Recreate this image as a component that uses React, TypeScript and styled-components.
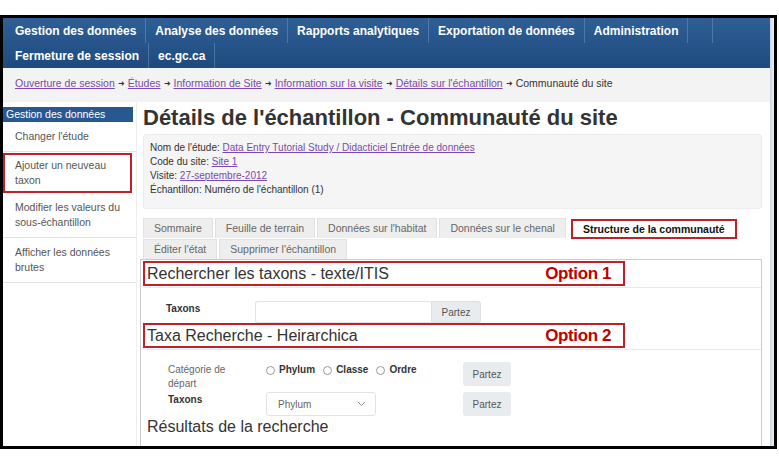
import React from "react";
import styled, { createGlobalStyle } from "styled-components";

const GlobalStyle = createGlobalStyle`
  body {
    margin: 0;
    background: #fff;
    font-family: "Liberation Sans", Arial, sans-serif;
  }
`;

const topMenu = [
  "Gestion des données",
  "Analyse des données",
  "Rapports analytiques",
  "Exportation de données",
  "Administration",
];

const crumbs = [
  "Ouverture de session",
  "Études",
  "Information de Site",
  "Information sur la visite",
  "Détails sur l'échantillon",
];

const sideItems = [
  { label: "Changer l'étude" },
  { label: "Ajouter un neuveau taxon", marked: true },
  { label: "Modifier les valeurs du sous-échantillon" },
  { label: "Afficher les données brutes" },
];

const tabsRow1 = [
  { label: "Sommaire" },
  { label: "Feuille de terrain" },
  { label: "Données sur l'habitat" },
  { label: "Données sur le chenal" },
  { label: "Structure de la communauté", active: true },
];

const tabsRow2 = [{ label: "Éditer l'état" }, { label: "Supprimer l'échantillon" }];

function App() {
  return (
    <>
      <GlobalStyle />
      <Frame>
        <Screen>
          <Content>
            <Nav>
              <NavRow>
                {topMenu.map((m, i) => (
                  <NavItem key={m} first={i === 0}>
                    {m}
                  </NavItem>
                ))}
                <NavItem />
              </NavRow>
              <NavRow>
                <NavItem first>Fermeture de session</NavItem>
                <NavItem>ec.gc.ca</NavItem>
              </NavRow>
            </Nav>
            <Breadcrumb>
              {crumbs.map((c) => (
                <React.Fragment key={c}>
                  <Crumb href="#">{c}</Crumb>
                  <Arrow>➜</Arrow>
                </React.Fragment>
              ))}
              <span>Communauté du site</span>
            </Breadcrumb>
            <Body>
              <Sidebar>
                <SideHeader>Gestion des données</SideHeader>
                {sideItems.map((s) => (
                  <SideItem key={s.label} marked={s.marked}>
                    {s.label}
                  </SideItem>
                ))}
              </Sidebar>
              <Main>
                <Title>Détails de l'échantillon - Communauté du site</Title>
                <InfoBox>
                  <div>
                    Nom de l'étude: <InfoLink href="#">Data Entry Tutorial Study / Didacticiel Entrée de données</InfoLink>
                  </div>
                  <div>
                    Code du site: <InfoLink href="#">Site 1</InfoLink>
                  </div>
                  <div>
                    Visite: <InfoLink href="#">27-septembre-2012</InfoLink>
                  </div>
                  <div>Échantillon: Numéro de l'échantillon (1)</div>
                </InfoBox>
                <Tabs>
                  <TabRow>
                    {tabsRow1.map((t) => (
                      <Tab key={t.label} active={t.active}>
                        {t.label}
                      </Tab>
                    ))}
                  </TabRow>
                  <TabRow>
                    {tabsRow2.map((t) => (
                      <Tab key={t.label}>{t.label}</Tab>
                    ))}
                  </TabRow>
                </Tabs>
                <Panel>
                  <SectionHead>
                    <Marked>
                      <span>Rechercher les taxons - texte/ITIS</span>
                      <OptionTag>Option 1</OptionTag>
                    </Marked>
                  </SectionHead>
                  <FormRow>
                    <FieldLabel bold>Taxons</FieldLabel>
                    <InputGroup>
                      <TextInput />
                      <AddonButton>Partez</AddonButton>
                    </InputGroup>
                  </FormRow>
                  <SectionHead>
                    <Marked>
                      <span>Taxa Recherche - Heirarchica</span>
                      <OptionTag>Option 2</OptionTag>
                    </Marked>
                  </SectionHead>
                  <HierForm>
                    <HierRow>
                      <FieldLabel>Catégorie de départ</FieldLabel>
                      <Radios>
                        {["Phylum", "Classe", "Ordre"].map((r) => (
                          <Radio key={r}>
                            <RadioDot />
                            {r}
                          </Radio>
                        ))}
                      </Radios>
                      <GrayButton>Partez</GrayButton>
                    </HierRow>
                    <HierRow>
                      <FieldLabel bold>Taxons</FieldLabel>
                      <Select>
                        <span>Phylum</span>
                        <svg width="9" height="6" viewBox="0 0 9 6">
                          <path d="M1 1l3.5 3.5L8 1" fill="none" stroke="#888" strokeWidth="1" />
                        </svg>
                      </Select>
                      <GrayButton>Partez</GrayButton>
                    </HierRow>
                  </HierForm>
                  <Results>Résultats de la recherche</Results>
                </Panel>
              </Main>
            </Body>
          </Content>
          <ScrollTrack />
        </Screen>
      </Frame>
    </>
  );
}

export default App;

const Frame = styled.div`
  margin-top: 15px;
  width: 777px;
  height: 434px;
  border: 3px solid #000;
  box-sizing: border-box;
  overflow: hidden;
  background: #fff;
`;

const Screen = styled.div`
  display: flex;
  height: 100%;
`;

const Content = styled.div`
  flex: 1;
  min-width: 0;
  display: flex;
  flex-direction: column;
`;

const ScrollTrack = styled.div`
  width: 4px;
  background: linear-gradient(90deg, #c9d4e0, #eef1f5);
`;

const Nav = styled.div`
  background: linear-gradient(#2f5f96, #1e4a7e);
  height: 50px;
`;

const NavRow = styled.div`
  display: flex;
  height: 25px;
`;

const NavItem = styled.div<{ first?: boolean }>`
  display: flex;
  align-items: center;
  padding: 0 9px 0 ${(p) => (p.first ? "12px" : "9px")};
  min-width: 6px;
  border-right: 1px solid rgba(150, 180, 215, 0.35);
  color: #fff;
  font-weight: bold;
  font-size: 12px;
  white-space: nowrap;
`;

const Breadcrumb = styled.div`
  display: flex;
  align-items: center;
  gap: 3px;
  height: 34px;
  padding: 0 0 4px 12px;
  box-sizing: border-box;
  background: #f3f3f3;
  font-size: 10.5px;
  color: #333;
  white-space: nowrap;
`;

const Crumb = styled.a`
  color: #7a48ae;
  text-decoration: underline;
`;

const Arrow = styled.span`
  font-size: 8px;
  color: #333;
`;

const Body = styled.div`
  flex: 1;
  display: flex;
  min-height: 0;
`;

const Sidebar = styled.div`
  width: 134px;
  padding-top: 5px;
  border-right: 1px solid #eee;
  box-sizing: border-box;
`;

const SideHeader = styled.div`
  height: 15px;
  line-height: 15px;
  padding-left: 3px;
  background: #285890;
  color: #fff;
  font-size: 10.5px;
  margin-right: 3px;
`;

const SideItem = styled.div<{ marked?: boolean }>`
  padding: ${(p) => (p.marked ? "3px 14px 3px 10px" : "7px 14px 7px 12px")};
  border: ${(p) => (p.marked ? "2px solid #c0202a" : "none")};
  border-bottom: ${(p) => (p.marked ? "2px solid #c0202a" : "1px solid #e3e3e3")};
  margin: ${(p) => (p.marked ? "1px 4px 0 0" : "0")};
  font-size: 10.5px;
  line-height: 15px;
  color: #555;
`;

const Main = styled.div`
  flex: 1;
  min-width: 0;
  padding: 0 8px 0 3px;
`;

const Title = styled.h1`
  margin: 2px 0 0 3px;
  font-size: 22px;
  line-height: 28px;
  font-weight: bold;
  color: #333;
  white-space: nowrap;
`;

const InfoBox = styled.div`
  margin: 2px 0 0 3px;
  padding: 6px 6px 11px;
  background: #f5f5f5;
  border: 1px solid #ececec;
  border-radius: 3px;
  font-size: 10px;
  line-height: 14px;
  color: #333;
`;

const InfoLink = styled.a`
  color: #7a48ae;
  text-decoration: underline;
`;

const Tabs = styled.div`
  display: flex;
  flex-direction: column;
  margin: 9px 0 0 3px;
`;

const TabRow = styled.div`
  display: flex;
  gap: 2px;
`;

const Tab = styled.div<{ active?: boolean }>`
  padding: 0 10px;
  height: ${(p) => (p.active ? "16px" : "19px")};
  line-height: ${(p) => (p.active ? "16px" : "19px")};
  margin: ${(p) => (p.active ? "1px 0 0 3px" : "0")};
  background: ${(p) => (p.active ? "#fff" : "#eee")};
  border: ${(p) => (p.active ? "2px solid #c0202a" : "1px solid #e2e2e2")};
  border-bottom: ${(p) => (p.active ? "2px solid #c0202a" : "none")};
  color: ${(p) => (p.active ? "#111" : "#666")};
  font-weight: ${(p) => (p.active ? "bold" : "normal")};
  font-size: 10.5px;
  white-space: nowrap;
`;

const Panel = styled.div`
  border: 1px solid #ccc;
  border-bottom: none;
  padding: 1px 0 20px 2px;
  height: 200px;
`;

const SectionHead = styled.div`
  border-bottom: 1px solid #eaeaea;
  padding-bottom: 1px;
`;

const Marked = styled.div`
  width: 482px;
  height: 25px;
  box-sizing: border-box;
  border: 2px solid #c0202a;
  display: flex;
  align-items: center;
  justify-content: space-between;
  padding: 0 12px 0 2px;
  font-size: 16px;
  color: #333;
`;

const OptionTag = styled.span`
  color: #c00000;
  font-weight: bold;
  font-size: 17px;
  letter-spacing: -0.4px;
`;

const FormRow = styled.div`
  display: flex;
  align-items: flex-start;
  padding: 14px 0 0 23px;
`;

const FieldLabel = styled.div<{ bold?: boolean }>`
  width: 89px;
  font-size: 10px;
  line-height: 14px;
  font-weight: ${(p) => (p.bold ? "bold" : "normal")};
  color: ${(p) => (p.bold ? "#333" : "#666")};
  padding-right: 20px;
  box-sizing: border-box;
`;

const InputGroup = styled.div`
  display: flex;
  height: 22px;
  margin-top: -1px;
`;

const TextInput = styled.div`
  width: 175px;
  border: 1px solid #e3e3e3;
  border-right: none;
  border-radius: 3px 0 0 3px;
  background: #fff;
`;

const AddonButton = styled.div`
  width: 48px;
  display: flex;
  align-items: center;
  justify-content: center;
  background: #e9ecef;
  border: 1px solid #e0e0e0;
  border-radius: 0 3px 3px 0;
  font-size: 10px;
  color: #555;
`;

const HierForm = styled.div`
  display: flex;
  flex-direction: column;
  gap: 2px;
  padding: 13px 0 0 25px;
`;

const HierRow = styled.div`
  display: grid;
  grid-template-columns: 98px 197px 48px;
  align-items: start;
`;

const Radios = styled.div`
  display: flex;
  gap: 8px;
  font-size: 10px;
  font-weight: bold;
  color: #333;
  line-height: 14px;
`;

const Radio = styled.label`
  display: flex;
  align-items: center;
  gap: 4px;
`;

const RadioDot = styled.span`
  width: 7px;
  height: 7px;
  border: 1px solid #999;
  border-radius: 50%;
`;

const GrayButton = styled.div`
  height: 24px;
  display: flex;
  align-items: center;
  justify-content: center;
  margin-top: -1px;
  background: #e9ecef;
  border-radius: 3px;
  font-size: 10px;
  color: #555;
`;

const Select = styled.div`
  width: 110px;
  height: 24px;
  box-sizing: border-box;
  margin-top: -1px;
  padding: 0 9px 0 11px;
  display: flex;
  align-items: center;
  justify-content: space-between;
  border: 1px solid #e3e3e3;
  border-radius: 3px;
  font-size: 10px;
  color: #666;
`;

const Results = styled.div`
  margin: 2px 0 0 4px;
  font-size: 16px;
  color: #333;
`;
